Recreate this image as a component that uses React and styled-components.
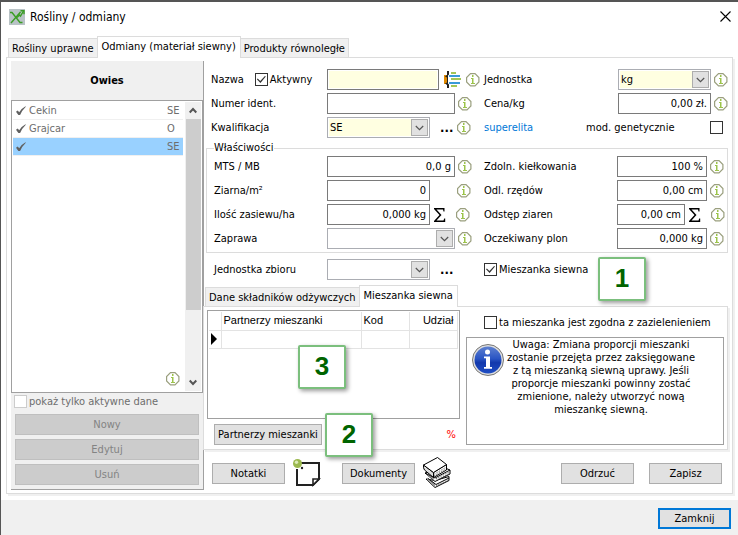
import React, { useState } from 'react'
import styled, { createGlobalStyle, css } from 'styled-components'

const GlobalStyle = createGlobalStyle`
  * {
    box-sizing: border-box;
  }

  body {
    margin: 0;
    background: #fff;
    color: #000;
    font-family: 'DejaVu Sans Condensed', 'Noto Sans', sans-serif;
    font-size: 11px;
    line-height: 13px;
  }

  button, input, select {
    font: inherit;
    color: inherit;
    margin: 0;
  }
`

const Window = styled.div`
  position: relative;
  display: flex;
  flex-direction: column;
  min-height: 100vh;
  border-top: 2px solid #555;
  border-left: 1px solid #555;
`

const TitleBar = styled.header`
  display: flex;
  align-items: center;
  gap: 5px;
  height: 29px;
  padding: 0 7px 0 8px;
`

const Title = styled.h1`
  flex: 1;
  margin: 0;
  padding-top: 2px;
  font-size: 12px;
  font-weight: 400;
`

const CloseButton = styled.button`
  display: flex;
  padding: 0;
  border: 0;
  background: none;
`

const Tabs = styled.div`
  display: flex;
  align-items: flex-end;
  height: 21px;
  padding-left: ${props => (props.$main ? '7px' : '1px')};
`

const Tab = styled.button`
  position: relative;
  height: 19px;
  padding: 0 3px;
  border: 1px solid #dcdcdc;
  border-bottom: 0;
  background: #f0f0f0;
  white-space: nowrap;

  & + & {
    margin-left: -1px;
  }

  ${props =>
    props.$active &&
    css`
      z-index: 1;
      height: 22px;
      margin-bottom: -1px;
      padding: 0 4px 3px;
      background: #fff;
    `}
`

const Page = styled.main`
  display: flex;
  margin: 0 5px 6px;
  padding: 3px 4px;
  border: 1px solid #dcdcdc;
  box-shadow: 2px 2px 0 #f0f0f0;
`

const TabArea = styled.div`
  padding-top: 5px;
`

const Side = styled.aside`
  display: flex;
  flex-direction: column;
  width: 193px;
  background: #f0f0f0;
  border-right: 1px solid #a0a0a0;
  border-bottom: 1px solid #a0a0a0;
`

const SideTitle = styled.h2`
  margin: 0;
  font-size: 11px;
  line-height: 39px;
  text-align: center;
`

const ListBox = styled.div`
  position: relative;
  display: flex;
  flex: 1;
  padding: 1px;
  border: 1px solid #a0a0a0;
  background: #fff;
`

const List = styled.ul`
  flex: 1;
  margin: 0 2px 0 0;
  padding: 0;
  list-style: none;
`

const ListItem = styled.li`
  display: flex;
  align-items: center;
  height: 18px;
  padding: 0 3px;
  border-bottom: 1px solid #f0f0f0;
  background: ${props => (props.$selected ? '#99d1ff' : '#fff')};
  color: #6d6d6d;

  span {
    flex: 1;
    padding-left: 3px;
  }

  small {
    width: 13px;
    font-size: 11px;
  }
`

const ScrollBar = styled.div`
  display: flex;
  flex-direction: column;
  align-items: center;
  width: 16px;
  background: #f0f0f0;
`

const ScrollArrow = styled.button`
  display: flex;
  align-items: center;
  justify-content: center;
  width: 16px;
  height: 17px;
  padding: 0;
  border: 0;
  background: none;
`

const ScrollThumb = styled.div`
  width: 15px;
  height: 191px;
  margin-bottom: auto;
  background: #cdcdcd;
`

const ListInfo = styled.div`
  position: absolute;
  right: 22px;
  bottom: 3px;
`

const CheckLabel = styled.label`
  display: inline-flex;
  align-items: center;
  gap: 2px;
  color: ${props => (props.$muted ? '#6d6d6d' : 'inherit')};
  white-space: nowrap;
`

const CheckBox = styled.input.attrs({ type: 'checkbox' })`
  position: relative;
  flex: none;
  appearance: none;
  width: 13px;
  height: 13px;
  border: 1px solid #333;
  background: #fff;

  &:disabled {
    border-color: #ccc;
  }

  &:checked::before {
    content: '';
    position: absolute;
    left: 1px;
    top: 2px;
    width: 9px;
    height: 7px;
    background: #333;
    clip-path: polygon(0 48%, 10% 36%, 38% 72%, 90% 0, 100% 8%, 40% 100%);
  }
`

const Button = styled.button`
  width: ${props => (props.$wide ? '108px' : '73px')};
  height: 21px;
  padding: 0;
  border: 1px solid #adadad;
  background: #e1e1e1;
  white-space: nowrap;

  &:disabled {
    width: auto;
    border-color: #bfbfbf;
    background: #ccc;
    color: #838383;
  }

  ${props =>
    props.$primary &&
    css`
      border: 2px solid #0078d7;
    `}
`

const SideActions = styled.div`
  display: flex;
  flex-direction: column;
  gap: 4px;
  padding: 2px 4px 4px 3px;

  ${Button} {
    margin-left: 1px;
  }

  ${CheckLabel} {
    margin-bottom: 2px;
  }
`

const Content = styled.div`
  flex: 1;
  display: flex;
  flex-direction: column;
  min-width: 0;
`

const FormRows = styled.div`
  display: grid;
  gap: 3px;
  padding: ${props => (props.$inset ? 0 : '8px 0 0 7px')};
`

const FormRow = styled.div`
  display: grid;
  grid-template-columns: ${props => (props.$inset ? 113 : 116)}px 157px 1fr 110px;
  align-items: center;
  height: 21px;
`

const Group = styled.fieldset`
  min-width: 0;
  margin: 3px 0 0 2px;
  padding: 1px 0 3px 7px;
  border: 1px solid #dcdcdc;
`

const Legend = styled.legend`
  padding: 0;
  line-height: 14px;
`

const LabelCell = styled.div`
  display: flex;
  align-items: center;
  gap: 11px;
`

const Control = styled.div`
  display: flex;
  align-items: center;
  height: 21px;

  > svg {
    flex: none;
    margin-left: ${props => props.$gap || 3}px;
  }
`

const SumControl = styled(Control)`
  > svg + svg {
    margin-left: 10px;
  }
`

const Field = styled.input`
  width: ${props => props.$w}px;
  height: 21px;
  padding: 0 3px;
  border: 1px solid #7a7a7a;
  background: ${props => (props.$required ? '#ffffe1' : '#fff')};
  box-shadow: inset 0 0 0 1px #fff;
  text-align: right;
`

const Combo = styled.div`
  position: relative;
  width: ${props => props.$w}px;
  height: 21px;
  padding: 1px;
  border: 1px solid #abadb3;

  select {
    display: block;
    appearance: none;
    width: 100%;
    height: 17px;
    padding: 0 18px 0 1px;
    border: 0;
    border-radius: 0;
    background: ${props => (props.$required ? '#ffffe1' : '#fff')};
  }
`

const ComboArrow = styled.span`
  position: absolute;
  top: 1px;
  right: 1px;
  display: flex;
  align-items: center;
  justify-content: center;
  width: 17px;
  height: 17px;
  border: 1px solid #adadad;
  background: #e1e1e1;
  pointer-events: none;
`

const MoreButton = styled.button`
  width: 13px;
  height: 13px;
  margin-left: 10px;
  padding: 0;
  border: 0;
  background: none;
  font-size: 13px;
  font-weight: 700;
  line-height: 8px;
`

const GradeLink = styled.a`
  color: #0078d7;
  text-decoration: none;
`

const ModLabel = styled.label`
  display: flex;
  align-items: center;
  justify-content: space-between;
  width: 137px;
  margin-left: -32px;
  white-space: nowrap;
`

const HarvestRow = styled(FormRow).attrs({ $inset: true })`
  margin: 6px 0 5px;
  padding-left: 10px;
`

const MixPage = styled.section`
  display: flex;
  gap: 6px;
  margin: 0 0 0 -1px;
  padding: 3px 3px 4px;
  border: 1px solid #dcdcdc;
  box-shadow: 2px 2px 0 #f0f0f0;
`

const GridColumn = styled.div`
  width: 253px;
`

const GridFrame = styled.div`
  height: 109px;
  padding: 1px;
  border: 1px solid #a0a0a0;
`

const PartnerTable = styled.table`
  width: 248px;
  border-collapse: collapse;
  table-layout: fixed;
  font-family: 'Liberation Sans', Arial, sans-serif;

  th, td {
    height: 18px;
    padding: 0 3px 0 2px;
    border: solid #e3e3e3;
    border-width: 0 1px 1px 0;
    font-weight: 400;
    text-align: left;
  }

  th:last-child {
    text-align: right;
  }

  td:first-child {
    padding: 0 0 0 2px;
  }

  svg {
    display: block;
  }
`

const PartnerActions = styled.div`
  display: flex;
  align-items: center;
  justify-content: space-between;
  margin-top: 5px;
  padding: 0 4px 0 7px;
  color: #f00;

  ${Button} {
    color: #000;
  }
`

const NoteColumn = styled.div`
  flex: 1;
  display: flex;
  flex-direction: column;
  gap: 8px;
  padding-top: 6px;

  ${CheckLabel} {
    margin-left: 18px;
  }
`

const Notice = styled.div`
  display: flex;
  flex: 1;
  padding: 0 26px 0 4px;
  border: 1px solid #a0a0a0;

  svg {
    flex: none;
    margin-top: 5px;
  }

  p {
    flex: 1;
    margin: 0;
    text-align: center;
    white-space: pre-line;
  }
`

const Actions = styled.div`
  display: flex;
  align-items: center;
  height: 34px;
  margin-top: 6px;
  padding: 0 6px 0 8px;

  svg {
    margin: 0 21px 0 8px;
  }

  svg + ${Button} + svg {
    margin-right: auto;
  }

  ${Button} + ${Button} {
    margin-left: 15px;
  }
`

const Footer = styled.footer`
  flex: 1;
  display: flex;
  justify-content: flex-end;
  padding: 8px 7px;
  background: #f0f0f0;
`

const Badge = styled.div`
  position: absolute;
  left: ${props => props.$x}px;
  top: ${props => props.$y}px;
  z-index: 2;
  width: 48px;
  height: 44px;
  border: 2px solid #7bbf7d;
  border-radius: 2px;
  background: #fff;
  box-shadow: 2px 2px 4px rgba(0, 0, 0, 0.4);
  color: #006400;
  font: 700 26px/38px 'Liberation Sans', Arial, sans-serif;
  text-align: center;
`

const AppIcon = () => (
  <svg width="16" height="16" viewBox="0 0 16 16">
    <rect width="16" height="16" fill="#b9c3c6" />
    <g fill="none" stroke="#3a9d23" strokeWidth="1.4">
      <path d="M1 3.500h2l8 10h2.500M2 14l9.500-11" />
      <path d="M8 8.500l2.500-2.500 1 1 3-5" />
      <path d="M11.500 1.700h3.500v3.500" />
    </g>
  </svg>
)

const CloseIcon = () => (
  <svg width="11" height="11" viewBox="0 0 11 11">
    <path d="M.5.5l10 10M10.500.5l-10 10" stroke="#000" strokeWidth="1.1" />
  </svg>
)

const InfoIcon = () => (
  <svg width="14" height="14" viewBox="0 0 14 14">
    <path
      d="M4.500.6h4.500l3.900 3.900v4.500l-3.900 3.900h-4.500l-3.900-3.900v-4.500z"
      fill="#fff"
      stroke="#9a9f7e"
      strokeWidth="1.2"
    />
    <path d="M6 2h1.500v2h-1.500zM5 5h2.500v5h1.500v1h-4v-1h1v-4h-1z" fill="#9cc44a" />
  </svg>
)

const SigmaIcon = () => (
  <svg width="13" height="14" viewBox="0 0 13 14">
    <path
      d="M1 0h10.500v3.500h-1l-.5-2h-6.500l5 5.500-5 5.500h7l.7-2h1v3.500h-11.200v-1l5.500-6-5.500-6z"
      fill="#000"
    />
  </svg>
)

const PickIcon = () => (
  <svg width="17" height="17" viewBox="0 0 17 17">
    <path d="M0 4h4v9h-4z" fill="#e08a00" />
    <path d="M3 0h2v3.500l-1 1v8l1 1v3.500h-2v-3l-2-1.500 2-1v-5l-2-1 2-1.500z" fill="#222" />
    <path d="M7 2h5M7 8h10M7 15h6" stroke="#a3c657" strokeWidth="2" />
    <path d="M5 5h11M5 12h11" stroke="#3a9ad9" strokeWidth="2" />
  </svg>
)

const Chevron = () => (
  <svg width="9" height="6" viewBox="0 0 9 6">
    <path d="M.8 1l3.700 3.700 3.700-3.700" fill="none" stroke="#555" strokeWidth="1.2" />
  </svg>
)

const ScrollChevron = ({ up }) => (
  <svg width="8" height="7" viewBox="0 0 8 7">
    <path
      d={up ? 'M.7 5.500l3.300-3.500 3.300 3.500' : 'M.7 1.500l3.300 3.500 3.300-3.500'}
      fill="none"
      stroke="#555"
      strokeWidth="2"
    />
  </svg>
)

const TickIcon = () => (
  <svg width="10" height="10" viewBox="0 0 10 10">
    <path d="M0 5.800l1.700-1.300 1.500 1.700q2.400-3.900 6.300-6l.3.500q-3.600 3.400-5.700 8.300h-1.700z" fill="#606060" />
  </svg>
)

const RowMarker = () => (
  <svg width="6" height="12" viewBox="0 0 6 12">
    <path d="M0 0l6 6-6 6z" fill="#000" />
  </svg>
)

const NoteIcon = () => (
  <svg width="28" height="28" viewBox="0 0 28 28">
    <path d="M8 4h18v16l-6 6h-16v-16" fill="none" stroke="#222" strokeWidth="2" />
    <path d="M20 26v-6h6z" fill="#fff" stroke="#222" strokeWidth="1.600" />
    <circle cx="9" cy="9" r="1.200" fill="#222" />
    <circle cx="4.500" cy="4.500" r="4.500" fill="#9cb94f" />
    <circle cx="3.500" cy="3.300" r="1.700" fill="#dcebb8" />
  </svg>
)

const BooksIcon = () => (
  <svg width="28" height="32" viewBox="0 0 28 32" strokeLinejoin="round">
    <path d="M3 22l9 8.500 14-7v-4l-14 4z" fill="#fff" stroke="#000" />
    <path d="M4 23l8 6.500v-3l-8-6z" fill="#999" />
    <path d="M5 21.500l8 6 13-6.500" fill="none" stroke="#000" />
    <path d="M13 29l13-6.500" stroke="#555" strokeDasharray="1 1" />
    <path d="M2 16l10 8.500 15-7.500v-4l-5-2z" fill="#fff" stroke="#000" />
    <path d="M3 17l8 6.500v-2.500l-8-4.500z" fill="#999" />
    <path d="M2 16l10 5 15-8" fill="none" stroke="#000" />
    <path d="M13 21.800l13-6.800M13 23.500l13-6.800" stroke="#555" strokeDasharray="1 1" />
    <path d="M.5 8l10 7.500v5l-9-7.500q-1.500-2-1-5z" fill="#ddd" stroke="#000" />
    <path d="M10.500 15.500l13-8v5.500l-13 7.500z" fill="#fff" stroke="#000" />
    <path d="M11 17.300l12-7M11 19l12-7" stroke="#666" strokeDasharray="1 1" />
    <path d="M.5 8l14-7.500 9 7-13 8z" fill="#fff" stroke="#000" />
  </svg>
)

const NoticeIcon = () => (
  <svg width="34" height="34" viewBox="0 0 34 34">
    <defs>
      <linearGradient id="ball" x1="0" y1="0" x2="0" y2="1">
        <stop offset="0" stopColor="#5d80d0" />
        <stop offset="0.45" stopColor="#2a55c4" />
        <stop offset="0.6" stopColor="#1238ac" />
        <stop offset="1" stopColor="#1f4ec4" />
      </linearGradient>
    </defs>
    <circle cx="17" cy="17" r="15.500" fill="#dedede" stroke="#777" />
    <circle cx="17" cy="17" r="13.500" fill="url(#ball)" />
    <circle cx="16.500" cy="9" r="2.500" fill="#fff" />
    <path d="M13 13.500h6v10.500h2v1.700h-8v-1.700h2v-8.700h-2z" fill="#fff" />
  </svg>
)

const Select = ({ w, required, value, label }) => (
  <Combo $w={w} $required={required}>
    <select aria-label={label} defaultValue={value}>
      <option value={value}>{value}</option>
    </select>
    <ComboArrow>
      <Chevron />
    </ComboArrow>
  </Combo>
)

const varieties = [
  { name: 'Cekin', grade: 'SE' },
  { name: 'Grajcar', grade: 'O' },
  { name: '', grade: 'SE' },
]

const SideList = () => (
  <Side>
    <SideTitle>Owies</SideTitle>
    <ListBox>
      <List>
        {varieties.map((item, i) => (
          <ListItem key={i} $selected={i === 2}>
            <TickIcon />
            <span>{item.name}</span>
            <small>{item.grade}</small>
          </ListItem>
        ))}
      </List>
      <ScrollBar>
        <ScrollArrow aria-label="up">
          <ScrollChevron up />
        </ScrollArrow>
        <ScrollThumb />
        <ScrollArrow aria-label="down">
          <ScrollChevron />
        </ScrollArrow>
      </ScrollBar>
      <ListInfo>
        <InfoIcon />
      </ListInfo>
    </ListBox>
    <SideActions>
      <CheckLabel $muted>
        <CheckBox disabled />
        pokaż tylko aktywne dane
      </CheckLabel>
      <Button disabled>Nowy</Button>
      <Button disabled>Edytuj</Button>
      <Button disabled>Usuń</Button>
    </SideActions>
  </Side>
)

const VarietyForm = ({ mix, setMix }) => (
  <>
    <FormRows>
      <FormRow>
        <LabelCell>
          <label htmlFor="name">Nazwa</label>
          <CheckLabel>
            <CheckBox defaultChecked />
            Aktywny
          </CheckLabel>
        </LabelCell>
        <Control $gap={5}>
          <Field id="name" $w={112} $required />
          <PickIcon />
          <InfoIcon />
        </Control>
        <span>Jednostka</span>
        <Control>
          <Select w={93} required value="kg" label="Jednostka" />
          <InfoIcon />
        </Control>
      </FormRow>
      <FormRow>
        <label htmlFor="ident">Numer ident.</label>
        <Control>
          <Field id="ident" $w={128} />
          <InfoIcon />
        </Control>
        <label htmlFor="price">Cena/kg</label>
        <Control>
          <Field id="price" $w={93} defaultValue="0,00 zł." />
          <InfoIcon />
        </Control>
      </FormRow>
      <FormRow>
        <span>Kwalifikacja</span>
        <Control $gap={4}>
          <Select w={103} required value="SE" label="Kwalifikacja" />
          <MoreButton>...</MoreButton>
          <InfoIcon />
        </Control>
        <GradeLink href="#">superelita</GradeLink>
        <ModLabel>
          mod. genetycznie
          <CheckBox />
        </ModLabel>
      </FormRow>
    </FormRows>
    <Group>
      <Legend>Właściwości</Legend>
      <FormRows $inset>
        <FormRow $inset>
          <label htmlFor="mts">MTS / MB</label>
          <Control>
            <Field id="mts" $w={128} defaultValue="0,0 g" />
            <InfoIcon />
          </Control>
          <label htmlFor="germ">Zdoln. kiełkowania</label>
          <Control>
            <Field id="germ" $w={90} defaultValue="100 %" />
            <InfoIcon />
          </Control>
        </FormRow>
        <FormRow $inset>
          <label htmlFor="grains">Ziarna/m²</label>
          <Control $gap={27}>
            <Field id="grains" $w={103} defaultValue="0" />
            <InfoIcon />
          </Control>
          <label htmlFor="rows">Odl. rzędów</label>
          <Control>
            <Field id="rows" $w={90} defaultValue="0,00 cm" />
            <InfoIcon />
          </Control>
        </FormRow>
        <FormRow $inset>
          <label htmlFor="sowing">Ilość zasiewu/ha</label>
          <SumControl>
            <Field id="sowing" $w={103} defaultValue="0,000 kg" />
            <SigmaIcon />
            <InfoIcon />
          </SumControl>
          <label htmlFor="spacing">Odstęp ziaren</label>
          <SumControl>
            <Field id="spacing" $w={68} defaultValue="0,00 cm" />
            <SigmaIcon />
            <InfoIcon />
          </SumControl>
        </FormRow>
        <FormRow $inset>
          <span>Zaprawa</span>
          <Control>
            <Select w={128} value="" label="Zaprawa" />
            <InfoIcon />
          </Control>
          <label htmlFor="yield">Oczekiwany plon</label>
          <Control>
            <Field id="yield" $w={90} defaultValue="0,000 kg" />
            <InfoIcon />
          </Control>
        </FormRow>
      </FormRows>
    </Group>
    <HarvestRow>
      <span>Jednostka zbioru</span>
      <Control>
        <Select w={103} value="" label="Jednostka zbioru" />
        <MoreButton>...</MoreButton>
      </Control>
      <CheckLabel>
        <CheckBox checked={mix} onChange={e => setMix(e.target.checked)} />
        Mieszanka siewna
      </CheckLabel>
    </HarvestRow>
  </>
)

const MixPanel = () => (
  <MixPage>
    <GridColumn>
      <GridFrame>
        <PartnerTable>
          <colgroup>
            <col width="12" />
            <col width="140" />
            <col width="48" />
            <col width="48" />
          </colgroup>
          <thead>
            <tr>
              <th></th>
              <th>Partnerzy mieszanki</th>
              <th>Kod</th>
              <th>Udział</th>
            </tr>
          </thead>
          <tbody>
            <tr>
              <td>
                <RowMarker />
              </td>
              <td></td>
              <td></td>
              <td></td>
            </tr>
          </tbody>
        </PartnerTable>
      </GridFrame>
      <PartnerActions>
        <Button $wide>Partnerzy mieszanki</Button>
        <span>%</span>
      </PartnerActions>
    </GridColumn>
    <NoteColumn>
      <CheckLabel>
        <CheckBox />
        ta mieszanka jest zgodna z zazielenieniem
      </CheckLabel>
      <Notice>
        <NoticeIcon />
        <p>
          {`Uwaga: Zmiana proporcji mieszanki
          zostanie przejęta przez zaksięgowane
          z tą mieszanką siewną uprawy. Jeśli
          proporcje mieszanki powinny zostać
          zmienione, należy utworzyć nową
          mieszankę siewną.`}
        </p>
      </Notice>
    </NoteColumn>
  </MixPage>
)

const App = () => {
  const [mix, setMix] = useState(true)

  return (
    <Window>
      <GlobalStyle />
      <TitleBar>
        <AppIcon />
        <Title>Rośliny / odmiany</Title>
        <CloseButton aria-label="close">
          <CloseIcon />
        </CloseButton>
      </TitleBar>
      <TabArea>
        <Tabs $main>
          <Tab>Rośliny uprawne</Tab>
          <Tab $active>Odmiany (materiał siewny)</Tab>
          <Tab>Produkty równoległe</Tab>
        </Tabs>
      </TabArea>
      <Page>
        <SideList />
        <Content>
          <VarietyForm mix={mix} setMix={setMix} />
          <Tabs>
            <Tab>Dane składników odżywczych</Tab>
            <Tab $active>Mieszanka siewna</Tab>
          </Tabs>
          <MixPanel />
          <Actions>
            <Button>Notatki</Button>
            <NoteIcon />
            <Button>Dokumenty</Button>
            <BooksIcon />
            <Button>Odrzuć</Button>
            <Button>Zapisz</Button>
          </Actions>
        </Content>
      </Page>
      <Footer>
        <Button $primary>Zamknij</Button>
      </Footer>
      <Badge $x={597} $y={255}>1</Badge>
      <Badge $x={324} $y={411}>2</Badge>
      <Badge $x={297} $y={343}>3</Badge>
    </Window>
  )
}

export default App
